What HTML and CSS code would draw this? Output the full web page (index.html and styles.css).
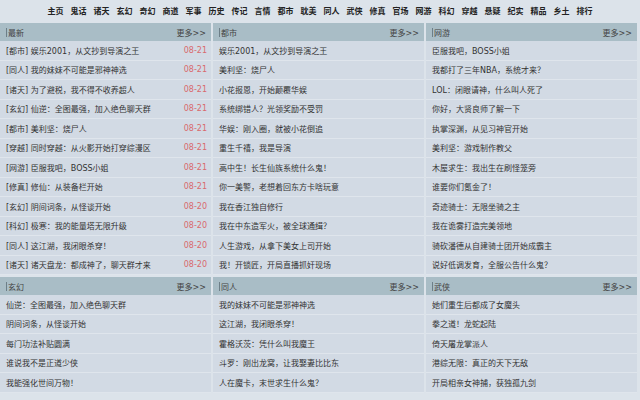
FILE: index.html
```html
<!DOCTYPE html>
<html lang="zh">
<head>
<meta charset="utf-8">
<title>小说</title>
<link rel="stylesheet" href="styles.css">
</head>
<body>
<nav class="nav">
  <a>主页</a><a>鬼话</a><a>诸天</a><a>玄幻</a><a>奇幻</a><a>商道</a><a>军事</a><a>历史</a><a>传记</a><a>言情</a><a>都市</a><a>耽美</a><a>同人</a><a>武侠</a><a>修真</a><a>官场</a><a>网游</a><a>科幻</a><a>穿越</a><a>悬疑</a><a>纪实</a><a>精品</a><a>乡土</a><a>排行</a>
</nav>
<main class="grid">
  <section class="box">
    <div class="head"><span class="title"><i class="bar"></i>最新</span><span class="more">更多&gt;&gt;</span></div>
    <ul class="list">
      <li><span>[都市] 娱乐2001，从文抄到导演之王</span><em>08-21</em></li>
      <li><span>[同人] 我的妹妹不可能是邪神神选</span><em>08-21</em></li>
      <li><span>[诸天] 为了避税，我不得不收养超人</span><em>08-21</em></li>
      <li><span>[玄幻] 仙逆：全图最强，加入绝色聊天群</span><em>08-21</em></li>
      <li><span>[都市] 美利坚：烧尸人</span><em>08-21</em></li>
      <li><span>[穿越] 同时穿越：从火影开始打穿综漫区</span><em>08-21</em></li>
      <li><span>[网游] 臣服我吧，BOSS小姐</span><em>08-21</em></li>
      <li><span>[修真] 修仙：从装备栏开始</span><em>08-21</em></li>
      <li><span>[玄幻] 阴间词条，从怪谈开始</span><em>08-20</em></li>
      <li><span>[科幻] 极寒：我的能量塔无限升级</span><em>08-20</em></li>
      <li><span>[同人] 这江湖，我闭眼杀穿！</span><em>08-20</em></li>
      <li><span>[诸天] 诸天盘龙：都成神了，聊天群才来</span><em>08-20</em></li>
    </ul>
  </section>
  <section class="box">
    <div class="head"><span class="title"><i class="bar"></i>都市</span><span class="more">更多&gt;&gt;</span></div>
    <ul class="list">
      <li><span>娱乐2001，从文抄到导演之王</span></li>
      <li><span>美利坚：烧尸人</span></li>
      <li><span>小花报恩，开始颠覆华娱</span></li>
      <li><span>系统绑错人？光领奖励不受罚</span></li>
      <li><span>华娱：刚入圈，就被小花倒追</span></li>
      <li><span>重生千禧，我是导演</span></li>
      <li><span>高中生！长生仙族系统什么鬼！</span></li>
      <li><span>你一美警，老想着回东方卡啥玩意</span></li>
      <li><span>我在香江独自修行</span></li>
      <li><span>我在中东造军火，被全球通缉？</span></li>
      <li><span>人生游戏，从拿下美女上司开始</span></li>
      <li><span>我！开锁匠，开局直播抓奸现场</span></li>
    </ul>
  </section>
  <section class="box">
    <div class="head"><span class="title"><i class="bar"></i>网游</span><span class="more">更多&gt;&gt;</span></div>
    <ul class="list">
      <li><span>臣服我吧，BOSS小姐</span></li>
      <li><span>我都打了三年NBA，系统才来？</span></li>
      <li><span>LOL：闭眼请神，什么叫人死了</span></li>
      <li><span>你好，大贤良师了解一下</span></li>
      <li><span>执掌深渊，从见习神官开始</span></li>
      <li><span>美利坚：游戏制作教父</span></li>
      <li><span>木屋求生：我出生在刷怪笼旁</span></li>
      <li><span>谁要你们氪金了！</span></li>
      <li><span>奇迹骑士：无限坐骑之主</span></li>
      <li><span>我在诡雾打造完美领地</span></li>
      <li><span>骑砍潘德从自建骑士团开始成霸主</span></li>
      <li><span>说好低调发育，全服公告什么鬼？</span></li>
    </ul>
  </section>
  <section class="box">
    <div class="head"><span class="title"><i class="bar"></i>玄幻</span><span class="more">更多&gt;&gt;</span></div>
    <ul class="list">
      <li><span>仙逆：全图最强，加入绝色聊天群</span></li>
      <li><span>阴间词条，从怪谈开始</span></li>
      <li><span>每门功法补贴圆满</span></li>
      <li><span>谁说我不是正道少侠</span></li>
      <li><span>我能强化世间万物！</span></li>
    </ul>
  </section>
  <section class="box">
    <div class="head"><span class="title"><i class="bar"></i>同人</span><span class="more">更多&gt;&gt;</span></div>
    <ul class="list">
      <li><span>我的妹妹不可能是邪神神选</span></li>
      <li><span>这江湖，我闭眼杀穿！</span></li>
      <li><span>霍格沃茨：凭什么叫我魔王</span></li>
      <li><span>斗罗：刚出龙窝，让我娶妻比比东</span></li>
      <li><span>人在魔卡，末世求生什么鬼？</span></li>
    </ul>
  </section>
  <section class="box">
    <div class="head"><span class="title"><i class="bar"></i>武侠</span><span class="more">更多&gt;&gt;</span></div>
    <ul class="list">
      <li><span>她们重生后都成了女魔头</span></li>
      <li><span>拳之道！龙蛇起陆</span></li>
      <li><span>倚天屠龙掌派人</span></li>
      <li><span>港综无限：真正的天下无敌</span></li>
      <li><span>开局相亲女神捕，获独孤九剑</span></li>
    </ul>
  </section>
</main>
</body>
</html>
```
FILE: styles.css
```css
* { box-sizing: border-box; }
html, body { margin: 0; padding: 0; }
body {
  background: #dce3ea;
  font-family: "DejaVu Sans", "Noto Sans CJK SC", sans-serif;
  font-size: 8px;
  color: #333;
  width: 640px;
}
.nav {
  display: flex;
  justify-content: center;
  gap: 7px;
  height: 23px;
  align-items: center;
  padding-bottom: 2px;
}
.nav a {
  font-weight: bold;
  color: #222;
  font-size: 8px;
  font-family: "Noto Sans CJK SC", sans-serif;
}
.grid {
  display: grid;
  grid-template-columns: 211px 211px 211px;
  column-gap: 2px;
  row-gap: 2px;
}
.box {
  background: #d2dae4;
}
.head {
  background: #a9bdc6;
  height: 18px;
  display: flex;
  align-items: center;
  justify-content: space-between;
  padding: 0 5px 0 6px;
  color: #444;
}
.title {
  display: flex;
  align-items: center;
}
.bar {
  display: inline-block;
  width: 1px;
  height: 9px;
  background: #6d7f88;
  margin-right: 1px;
}
.more { color: #444; }
.list {
  list-style: none;
  margin: 0;
  padding: 0;
}
.list li {
  height: 19.5px;
  display: flex;
  align-items: center;
  justify-content: space-between;
  padding: 0 4px 0 6px;
  border-bottom: 1px solid #dfe5ec;
  white-space: nowrap;
}
.list em {
  font-style: normal;
  color: #d9696d;
}
```
